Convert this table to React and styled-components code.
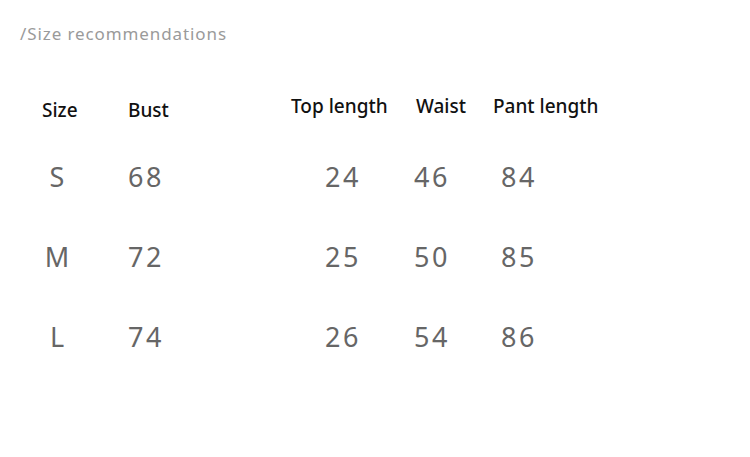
import React from 'react'
import styled, { createGlobalStyle } from 'styled-components'

const headers = [
  { label: 'Size', lift: 0 },
  { label: 'Bust', lift: 0 },
  { label: 'Top length', lift: 4 },
  { label: 'Waist', lift: 4 },
  { label: 'Pant length', lift: 4 },
]

const rows = [
  ['S', '68', '24', '46', '84'],
  ['M', '72', '25', '50', '85'],
  ['L', '74', '26', '54', '86'],
]

const App = () => {
  return (
    <Page>
      <Global />
      <Subtitle>/Size recommendations</Subtitle>
      <HeaderRow>
        {headers.map((h) => (
          <HeadCell key={h.label} lift={h.lift}>{h.label}</HeadCell>
        ))}
      </HeaderRow>
      <Rows>
        {rows.map((r) => (
          <DataRow key={r[0]}>
            <SizeCell>{r[0]}</SizeCell>
            {r.slice(1).map((v, i) => (
              <NumCell key={i}>{v}</NumCell>
            ))}
          </DataRow>
        ))}
      </Rows>
    </Page>
  )
}

export default App

const Global = createGlobalStyle`
body {
  margin: 0;
  background: #fff;
}
`

const Page = styled.div`
width: 750px;
height: 457px;
background: #fff;
font-family: "Noto Sans", "Noto Sans CJK SC", sans-serif;
overflow: hidden;
padding-top: 23px;
box-sizing: border-box;
`

const Subtitle = styled.div`
padding-left: 20px;
font-size: 17px;
line-height: 22px;
color: #9a9a9a;
letter-spacing: 0.9px;
`

const HeaderRow = styled.div`
display: grid;
grid-template-columns: 86px 163px 125px 77px 1fr;
align-items: end;
padding-left: 42px;
margin-top: 47px;
height: 30px;
`

const HeadCell = styled.div`
font-size: 19px;
line-height: 24px;
font-weight: 500;
color: #111;
margin-bottom: ${({ lift }) => lift}px;
white-space: nowrap;
`

const Rows = styled.div`
padding-top: 15px;
`

const DataRow = styled.div`
display: grid;
grid-template-columns: 128px 197px 89px 87px 1fr;
align-items: center;
height: 80px;
`

const SizeCell = styled.div`
width: 114px;
text-align: center;
font-size: 27px;
line-height: 80px;
color: #666;
`

const NumCell = styled.div`
font-size: 27px;
line-height: 80px;
color: #666;
letter-spacing: 2.5px;
`
